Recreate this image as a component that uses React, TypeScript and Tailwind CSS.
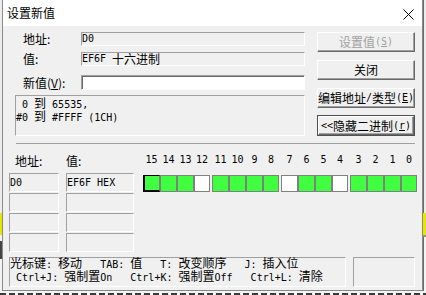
import type { ReactNode } from "react";

const CJK = /([\u2E80-\u9FFF\uFF00-\uFFEF]+)/;
const mono = "font-['DejaVu_Sans_Mono',monospace] text-[10px] whitespace-pre";
const cjk = "font-['Noto_Sans_CJK_SC',sans-serif]";

// ascii in a 6px mono cell, han characters at 12px, like the old bitmap font
function Mx({ text }: { text: string }) {
  return (
    <>
      {text.split(CJK).map((s, i) =>
        i % 2 === 1 ? (
          <span key={i} className={`${cjk} text-[12px] leading-[10px]`}>
            {s}
          </span>
        ) : (
          <span key={i}>{s}</span>
        )
      )}
    </>
  );
}

function Field({ className = "", children }: { className?: string; children?: ReactNode }) {
  return (
    <div
      className={`flex items-center border border-[#a0a0a0] border-r-white border-b-white ${mono} leading-[12px] text-black ${className}`}
    >
      {children}
    </div>
  );
}

function Btn({ children, disabled, primary }: { children: ReactNode; disabled?: boolean; primary?: boolean }) {
  const inner = (
    <div
      className={`flex h-full w-full items-center justify-center border border-white border-r-[#696969] border-b-[#696969] bg-[#f0f0f0] shadow-[inset_-1px_-1px_0_#a0a0a0] ${mono} leading-[12px] ${
        disabled ? "text-[#a0a0a0]" : "text-black"
      }`}
    >
      {children}
    </div>
  );
  if (primary) return <div className="h-[21px] w-[98px] border border-[#505050]">{inner}</div>;
  return <div className="h-[20px] w-[98px]">{inner}</div>;
}

const bits = [1, 1, 1, 0, 1, 1, 1, 1, 0, 1, 1, 0, 1, 1, 1, 1];
const widths = ["w-[17px]", "w-[17px]", "w-[17px]", "w-[16px]"];

function BitRow({ render }: { render: (n: number, w: string) => ReactNode }) {
  return (
    <div className="flex gap-[2px]">
      {[0, 1, 2, 3].map((g) => (
        <div key={g} className="flex">
          {[0, 1, 2, 3].map((k) => render(g * 4 + k, widths[k]))}
        </div>
      ))}
    </div>
  );
}

export default function App() {
  return (
    <div className="flex h-[295px] w-[426px] flex-col overflow-hidden bg-[#f4f4f4]">
      <div className="flex h-[291px]">
        {/* desktop behind, left */}
        <div className="flex w-[2px] flex-col">
          <div className="h-[213px] bg-[#ececec]" />
          <div className="h-[22px] bg-[#e6e600]" />
          <div className="mt-[6px] h-[18px] bg-[#444]" />
        </div>

        <div className="flex h-[291px] w-[421px] flex-col border-x border-b border-[#8a8a8a] bg-[#f0f0f0]">
          <div className="flex h-[26px] shrink-0 items-center justify-between bg-white pl-[4px] pr-[8px]">
            <span className={`${cjk} text-[12px] text-black`}>设置新值</span>
            <svg width="11" height="11" viewBox="0 0 11 11" className="mt-[2px]">
              <path d="M0.5 0.5 L10.5 10.5 M10.5 0.5 L0.5 10.5" stroke="#000" strokeWidth="1" />
            </svg>
          </div>

          <div className="flex flex-col">
            <div className="flex gap-[12px] pl-[12px] pt-[6px]">
              <div className="flex w-[290px] flex-col">
                <div className="flex h-[14px] items-center">
                  <span className={`${cjk} w-[66px] pl-[8px] text-[12px] leading-[14px]`}>地址:</span>
                  <Field className="h-[14px] w-[224px]">D0</Field>
                </div>
                <div className="mt-[6px] flex h-[14px] items-center">
                  <span className={`${cjk} w-[66px] pl-[8px] text-[12px] leading-[14px]`}>值:</span>
                  <Field className="h-[14px] w-[224px]">
                    <Mx text="EF6F 十六进制" />
                  </Field>
                </div>
                <div className="mt-[9px] flex h-[15px] items-center">
                  <span className={`${cjk} w-[66px] pl-[8px] text-[12px] leading-[14px]`}>
                    新值(<u>V</u>):
                  </span>
                  <div className="h-[15px] w-[224px] border border-[#a0a0a0] border-r-white border-b-white bg-white shadow-[inset_1px_1px_0_#696969]" />
                </div>
                <div
                  className={`mt-[5px] h-[41px] w-[290px] border border-[#a0a0a0] border-r-white border-b-white pt-[2px] ${mono} leading-[12px]`}
                >
                  <div>
                    <Mx text=" 0 到 65535," />
                  </div>
                  <div>
                    <Mx text="#0 到 #FFFF (1CH)" />
                  </div>
                </div>
              </div>

              <div className="flex w-[98px] flex-col">
                <Btn disabled>
                  <Mx text="设置值(" />
                  <u>S</u>)
                </Btn>
                <div className="mt-[8px]">
                  <Btn>
                    <Mx text="关闭" />
                  </Btn>
                </div>
                <div className="mt-[8px]">
                  <Btn>
                    <Mx text="编辑地址/类型(" />
                    <u>E</u>)
                  </Btn>
                </div>
                <div className="mt-[7px]">
                  <Btn primary>
                    <Mx text="<<隐藏二进制(" />
                    <u>r</u>)
                  </Btn>
                </div>
              </div>
            </div>

            <div className="ml-[13px] mt-[7px] h-[2px] w-[399px] border-t border-[#a0a0a0] border-b-white" />

            <div className="flex gap-[9px] pl-[6px]">
              <div className="flex w-[125px] flex-col">
                <div className={`flex h-[28px] pt-[8px] ${cjk} text-[12px] leading-[16px]`}>
                  <span className="w-[57px] pl-[6px]">地址:</span>
                  <span>值:</span>
                </div>
                <div className="flex flex-col gap-[1px]">
                  {[0, 1, 2, 3].map((r) => (
                    <div key={r} className="flex gap-[7px]">
                      <Field className="h-[19px] w-[50px]">{r === 0 ? "D0" : ""}</Field>
                      <Field className="h-[19px] w-[68px]">{r === 0 ? "EF6F HEX" : ""}</Field>
                    </div>
                  ))}
                </div>
              </div>

              <div className="flex flex-col pt-[9px]">
                <BitRow
                  render={(n, w) => (
                    <div key={n} className={`${w} text-center ${mono} leading-[12px]`}>
                      {15 - n}
                    </div>
                  )}
                />
                <div className="mt-[9px]">
                  <BitRow
                    render={(n, w) => (
                      <div
                        key={n}
                        className={`${w} h-[17px] border ${
                          n === 0 ? "border-black border-l-2 border-b-2 border-r-[#808080]" : "border-[#808080]"
                        } ${bits[n] ? "bg-[#40ff40]" : "bg-white"}`}
                      />
                    )}
                  />
                </div>
              </div>
            </div>

            <div className="mt-[5px] flex gap-[7px] pl-[6px]">
              <div
                className={`h-[30px] w-[337px] border border-[#a0a0a0] border-r-white border-b-white ${mono} leading-[13px]`}
              >
                <div>
                  <Mx text="光标键: 移动   TAB: 值   T: 改变顺序   J: 插入位" />
                </div>
                <div>
                  <Mx text=" Ctrl+J: 强制置On   Ctrl+K: 强制置Off   Ctrl+L: 清除" />
                </div>
              </div>
              <div className="h-[30px] w-[62px] border border-[#a0a0a0] border-r-white border-b-white" />
            </div>
          </div>
        </div>

        {/* desktop behind, right */}
        <div className="flex w-[3px] flex-col">
          <div className="h-[213px] border-l border-[#6a6a6a] bg-[#ececec]" />
          <div className="h-[22px] bg-[#e6e600]" />
          <div className="h-[2px] bg-[#909090]" />
          <div className="flex-1 border-l border-[#6a6a6a]" />
        </div>
      </div>
      <div className="mt-[2px] h-[2px] w-[426px] bg-[repeating-linear-gradient(90deg,#3a3a3a_0_6px,transparent_6px_9px)]" />
    </div>
  );
}
